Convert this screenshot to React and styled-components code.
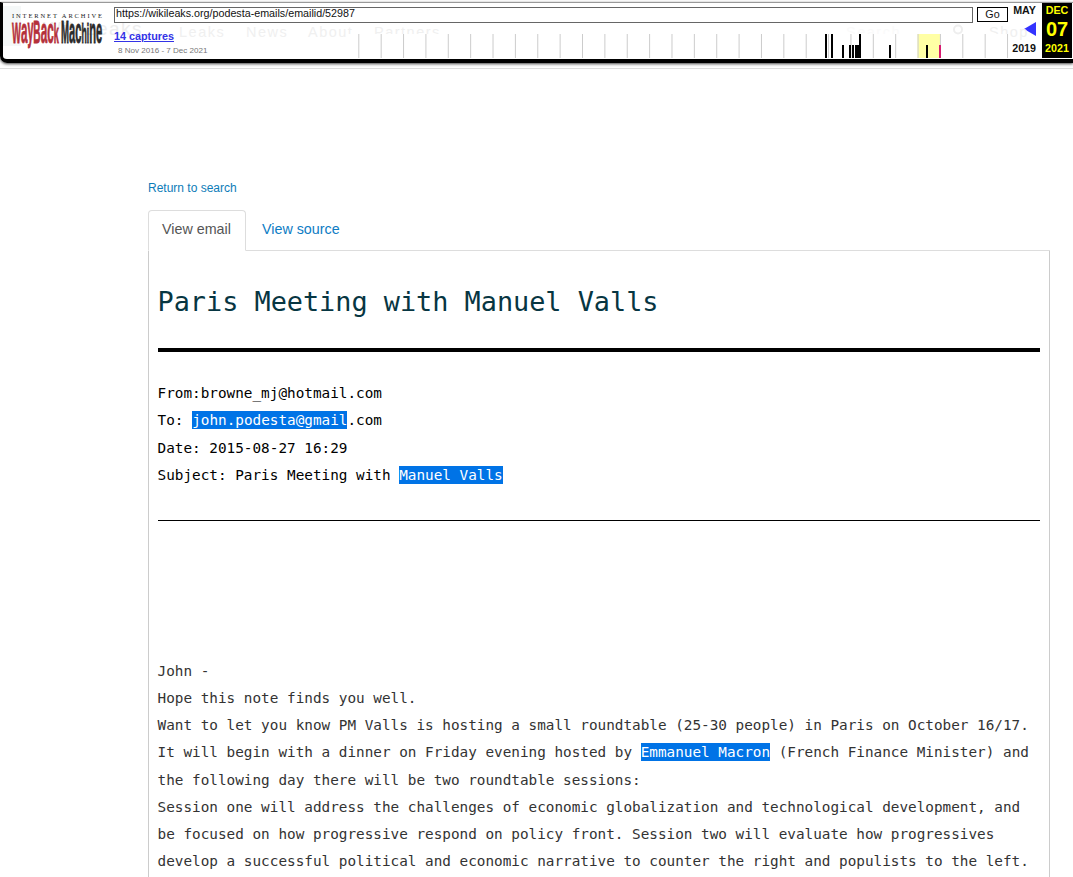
import React from 'react';
import styled, { createGlobalStyle } from 'styled-components';

const GlobalStyle = createGlobalStyle`
  * {
    box-sizing: border-box;
  }

  body {
    margin: 0;
    background: #fff;
    font-family: "Liberation Sans", Arial, sans-serif;
  }
`;

const Page = styled.div`
  height: 877px;
  overflow: hidden;
`;

const Toolbar = styled.header`
  display: flex;
  position: relative;
  height: 61px;
  margin-top: 2px;
  border-top: 1px solid #999;
  border-left: 3px solid #000;
  border-bottom: 4px solid #000;
  border-bottom-left-radius: 7px;
  box-shadow: 0 1px 3px #444;
`;

const HeaderEdge = styled.div`
  height: 6px;
  border-bottom: 1px solid #ddd;
`;

const Ghost = styled.span`
  position: absolute;
  left: ${(props) => props.$x}px;
  top: ${(props) => props.$y || 20}px;
  font-size: ${(props) => props.$size || 14.5}px;
  line-height: 18px;
  letter-spacing: 1.5px;
  color: ${(props) => props.$color || '#f0f0f0'};
  white-space: nowrap;
`;

const LogoArea = styled.div`
  flex: 0 0 111px;
  background: linear-gradient(to right, #f5f8f8 18px, transparent 18px) no-repeat 0 3px / 18px 40px;

  svg {
    display: block;
    position: relative;
  }
`;

const Middle = styled.div`
  flex: 0 0 894px;
  padding-top: 4px;
  position: relative;
`;

const AddressRow = styled.div`
  display: flex;
  gap: 4px;
`;

const Address = styled.div`
  width: 859px;
  height: 16px;
  padding-left: 1px;
  border: 1px solid #666;
  background: #fff;
  color: #111;
  font-size: 10.72px;
  line-height: 11px;
`;

const GoButton = styled.button`
  width: 31px;
  height: 15px;
  padding: 0 0 1px;
  border: 1px solid #000;
  background: #fff;
  color: #111;
  font: 10.72px/12px "Liberation Sans", Arial, sans-serif;
`;

const History = styled.div`
  display: flex;
  height: 35px;
`;

const Captures = styled.div`
  width: 233px;
  padding-top: 7px;

  a {
    display: block;
    color: #3333e6;
    font-size: 10.8px;
    font-weight: bold;
    line-height: 13px;
    text-decoration: underline;
  }

  span {
    display: block;
    padding: 3px 0 0 4px;
    color: #777;
    font-size: 8.05px;
    line-height: 10px;
  }
`;

const Timeline = styled.svg`
  display: block;
  overflow: visible;
  width: 661px;
  height: 25px;
  margin-top: 11px;
  background: #fff;
`;

const DateColumn = styled.div`
  display: flex;
  flex-direction: column;
  align-items: ${(props) => (props.$current ? 'center' : 'flex-end')};
  flex: 0 0 ${(props) => (props.$current ? 30 : 28)}px;
  height: 55px;
  margin-left: ${(props) => (props.$current ? 6 : 0)}px;
  background: ${(props) => (props.$current ? '#000' : 'transparent')};
  color: ${(props) => (props.$current ? '#ff0' : '#111')};
  font-size: 10.7px;
  font-weight: bold;
  line-height: 14px;

  strong {
    font-size: 20px;
    line-height: 24px;
  }
`;

const Arrow = styled.svg`
  display: block;
  width: 12px;
  height: 14px;
  margin: 5px 0;
`;

const Content = styled.main`
  width: 902px;
  margin: 111px 0 0 148px;
`;

const ReturnLink = styled.a`
  display: block;
  color: #0d7cb8;
  font-size: 12px;
  line-height: 16px;
`;

const Tabs = styled.nav`
  display: flex;
  height: 41px;
  margin-top: 14px;
  border-bottom: 1px solid #ddd;
`;

const Tab = styled.a`
  width: ${(props) => (props.$active ? 98 : 106)}px;
  height: 41px;
  padding: 8px 0 0 ${(props) => (props.$active ? 13 : 15)}px;
  border: 1px solid ${(props) => (props.$active ? '#ddd' : 'transparent')};
  border-bottom-color: ${(props) => (props.$active ? '#fff' : '#ddd')};
  border-radius: 4px 4px 0 0;
  color: ${(props) => (props.$active ? '#555' : '#0d7cc4')};
  font-size: 14.3px;
  line-height: 20px;
`;

const Email = styled.article`
  height: 640px;
  padding: 33px 9px 0;
  border: 1px solid #ccc;
  border-top: 0;
  font-family: "DejaVu Sans Mono", monospace;
  font-size: 14.33px;
  line-height: 27.17px;
`;

const Subject = styled.h2`
  margin: 0 0 0 -0.5px;
  color: #073642;
  font-size: 26.85px;
  font-weight: normal;
  line-height: 36px;
`;

const Divider = styled.hr`
  height: ${(props) => (props.$thick ? 4 : 1)}px;
  margin: ${(props) => (props.$thick ? '28px 0 28.2px' : '31px 0 137px')};
  border: 0;
  background: #000;
`;

const Fields = styled.div`
  margin-left: -0.4px;
  color: #000;
`;

const Body = styled.div`
  margin-left: -0.4px;
  color: #333;
`;

const Line = styled.div`
  white-space: pre;
`;

const Highlight = styled.mark`
  padding: 1px 0;
  background: #0073e6;
  color: #fff;
`;

const months = Array.from({ length: 30 }, (_, i) => 11.3 + i * 22.37);

// x, width, height, colour
const captures = [
  [478, 2, 24],
  [484, 2, 24],
  [495, 2, 13],
  [502, 2, 13],
  [505, 2, 13],
  [508, 5, 13],
  [512, 2, 24],
  [542, 2, 13],
  [579, 2, 13],
  [592, 2, 13, '#d81b70'],
];

const ghosts = [
  { text: 'WikiLeaks', x: 40, y: 17, size: 19, color: '#ededed' },
  { text: 'Leaks', x: 176 },
  { text: 'News', x: 243 },
  { text: 'About', x: 305 },
  { text: 'Partners', x: 371 },
  { text: 'Search', x: 843, color: '#fafafa' },
  { text: 'Shop', x: 986 },
];

const bodyLines = [
  'John -',
  'Hope this note finds you well.',
  'Want to let you know PM Valls is hosting a small roundtable (25-30 people) in Paris on October 16/17.',
  <>It will begin with a dinner on Friday evening hosted by <Highlight>Emmanuel Macron</Highlight> (French Finance Minister) and</>,
  'the following day there will be two roundtable sessions:',
  'Session one will address the challenges of economic globalization and technological development, and',
  'be focused on how progressive respond on policy front. Session two will evaluate how progressives',
  'develop a successful political and economic narrative to counter the right and populists to the left.',
];

// short letters are set larger so that they reach the height of the capitals
const Logo = () => (
  <svg width="111" height="52">
    <text x="9" y="15.3" fontFamily="Liberation Serif, serif" fontSize="6.5" fill="#222" textLength="90">
      INTERNET ARCHIVE
    </text>
    <g fontFamily="Liberation Sans, Arial, sans-serif" fontWeight="bold" fontSize="28" strokeWidth="0.8">
      <text transform="translate(9 40) scale(0.325 1)" fill="#b5313b" stroke="#b5313b">
        <tspan fontSize="29">W</tspan><tspan fontSize="36">a</tspan><tspan fontSize="33" dy="-2">y</tspan><tspan fontSize="31" dy="2">B</tspan><tspan fontSize="36">ac</tspan>k
      </text>
      <text transform="translate(58 40) scale(0.31 1)" fill="#2b2b2b" stroke="#2b2b2b">
        <tspan fontSize="31">M</tspan><tspan fontSize="36">ac</tspan>hi<tspan fontSize="36">ne</tspan>
      </text>
    </g>
  </svg>
);

const WaybackToolbar = () => (
  <Toolbar>
    {ghosts.map((g) => (
      <Ghost key={g.text} $x={g.x} $y={g.y} $size={g.size} $color={g.color}>{g.text}</Ghost>
    ))}
    <LogoArea>
      <Logo />
    </LogoArea>
    <Middle>
      <AddressRow>
        <Address>https://wikileaks.org/podesta-emails/emailid/52987</Address>
        <GoButton>Go</GoButton>
      </AddressRow>
      <History>
        <Captures>
          <a>14 captures</a>
          <span>8 Nov 2016 - 7 Dec 2021</span>
        </Captures>
        <Timeline viewBox="0 0 661 25">
          <circle cx="611" cy="-4.5" r="4" fill="none" stroke="#eee" strokeWidth="2" />
          <rect x="570.5" y="0" width="22.5" height="24" fill="#ffffa5" />
          {months.map((x) => (
            <rect key={x} x={x} y="0" width="1" height="24" fill="#ccc" />
          ))}
          {captures.map(([x, w, h, color]) => (
            <rect key={x} x={x} y={24 - h} width={w} height={h} fill={color || '#000'} />
          ))}
        </Timeline>
      </History>
    </Middle>
    <DateColumn>
      <span>MAY</span>
      <Arrow viewBox="0 0 12 14">
        <path d="M12 0v14L0 7z" fill="#3333ff" />
      </Arrow>
      <span>2019</span>
    </DateColumn>
    <DateColumn $current>
      <span>DEC</span>
      <strong>07</strong>
      <span>2021</span>
    </DateColumn>
  </Toolbar>
);

const App = () => (
  <Page>
    <GlobalStyle />
    <WaybackToolbar />
    <HeaderEdge />
    <Content>
      <ReturnLink>Return to search</ReturnLink>
      <Tabs>
        <Tab $active>View email</Tab>
        <Tab>View source</Tab>
      </Tabs>
      <Email>
        <Subject>Paris Meeting with Manuel Valls</Subject>
        <Divider $thick />
        <Fields>
          <Line>From:browne_mj@hotmail.com</Line>
          <Line>To: <Highlight>john.podesta@gmail</Highlight>.com</Line>
          <Line>Date: 2015-08-27 16:29</Line>
          <Line>Subject: Paris Meeting with <Highlight>Manuel Valls</Highlight></Line>
        </Fields>
        <Divider />
        <Body>
          {bodyLines.map((line, idx) => (
            <Line key={idx}>{line}</Line>
          ))}
        </Body>
      </Email>
    </Content>
  </Page>
);

export default App;
